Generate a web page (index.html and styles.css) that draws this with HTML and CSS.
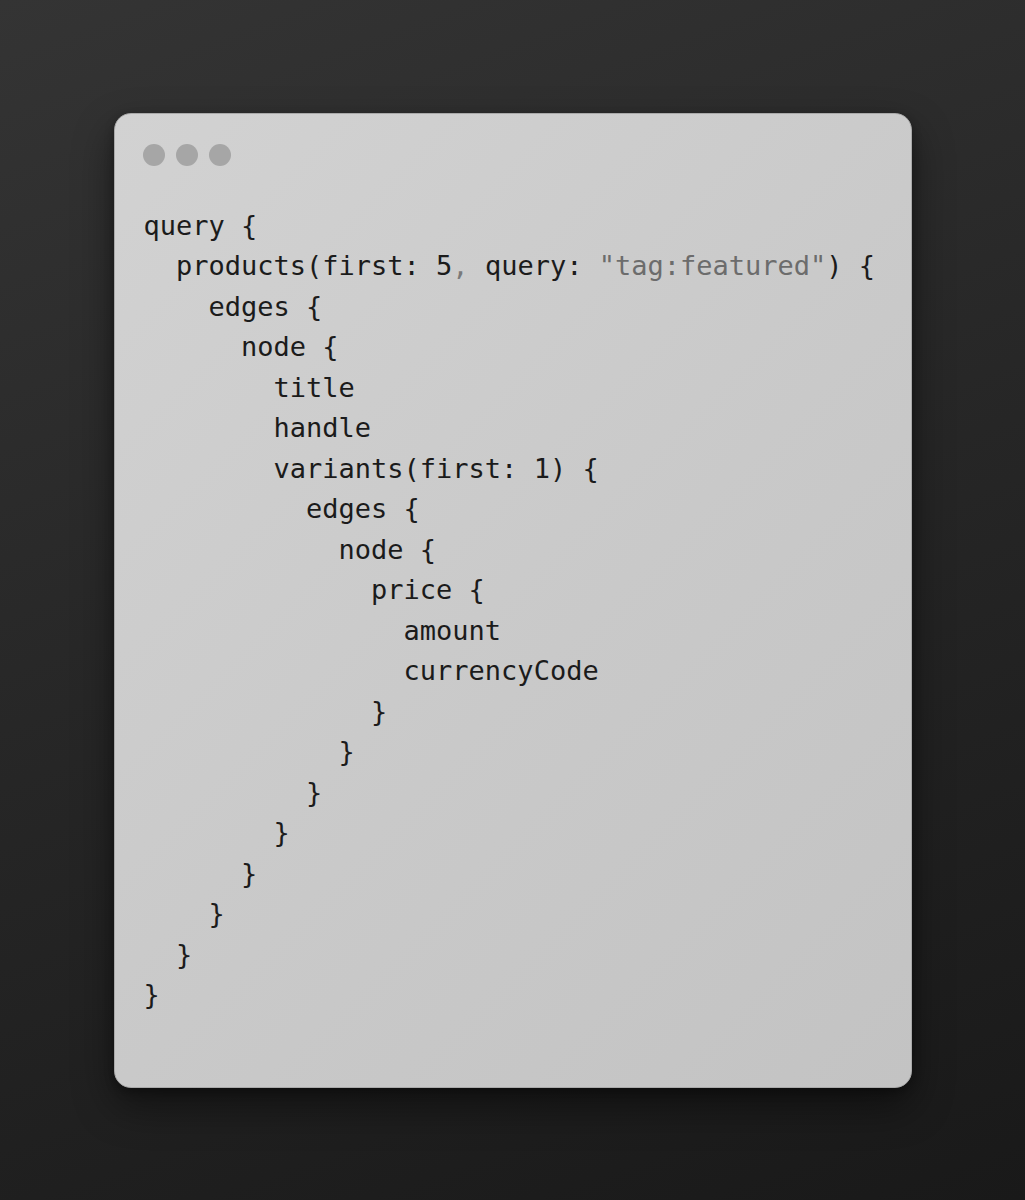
FILE: index.html
```html
<!DOCTYPE html>
<html lang="en">
<head>
<meta charset="utf-8">
<title>GraphQL query</title>
<link rel="stylesheet" href="styles.css">
</head>
<body>
<main class="stage">
  <section class="window">
    <div class="dots">
      <span class="dot"></span><span class="dot"></span><span class="dot"></span>
    </div>
<pre class="code">query {
  products(first: 5<span class="punc">,</span> query: <span class="str">"tag:featured"</span>) {
    edges {
      node {
        title
        handle
        variants(first: 1) {
          edges {
            node {
              price {
                amount
                currencyCode
              }
            }
          }
        }
      }
    }
  }
}</pre>
  </section>
</main>
</body>
</html>
```

FILE: styles.css
```css
html, body {
  margin: 0;
  padding: 0;
}
body {
  width: 1025px;
  height: 1200px;
  background: linear-gradient(160deg, #343434 0%, #262626 50%, #191919 100%);
  font-family: "DejaVu Sans Mono", "Liberation Mono", monospace;
}
.stage {
  height: 1200px;
  display: flex;
  align-items: center;
  justify-content: center;
}
.window {
  width: 798px;
  box-sizing: border-box;
  padding: 30px 30px 71px 28px;
  border-radius: 17px;
  background: linear-gradient(135deg, #d2d2d2 0%, #c9c9c9 55%, #c3c3c3 100%);
  border: 1px solid #a9a9a9;
  box-shadow: 0 18px 40px rgba(0, 0, 0, 0.45), 0 4px 10px rgba(0, 0, 0, 0.3);
}
.dots {
  display: flex;
  gap: 11px;
  height: 22px;
}
.dot {
  width: 22px;
  height: 22px;
  border-radius: 50%;
  background: #a6a6a6;
}
.code {
  margin: 40px 0 0 1px;
  font-family: "DejaVu Sans Mono", "Liberation Mono", monospace;
  font-size: 27px;
  line-height: 40.5px;
  color: #1b1b1b;
}
.str {
  color: #6c6c6c;
}
.punc {
  color: #7a7a7a;
}
```
